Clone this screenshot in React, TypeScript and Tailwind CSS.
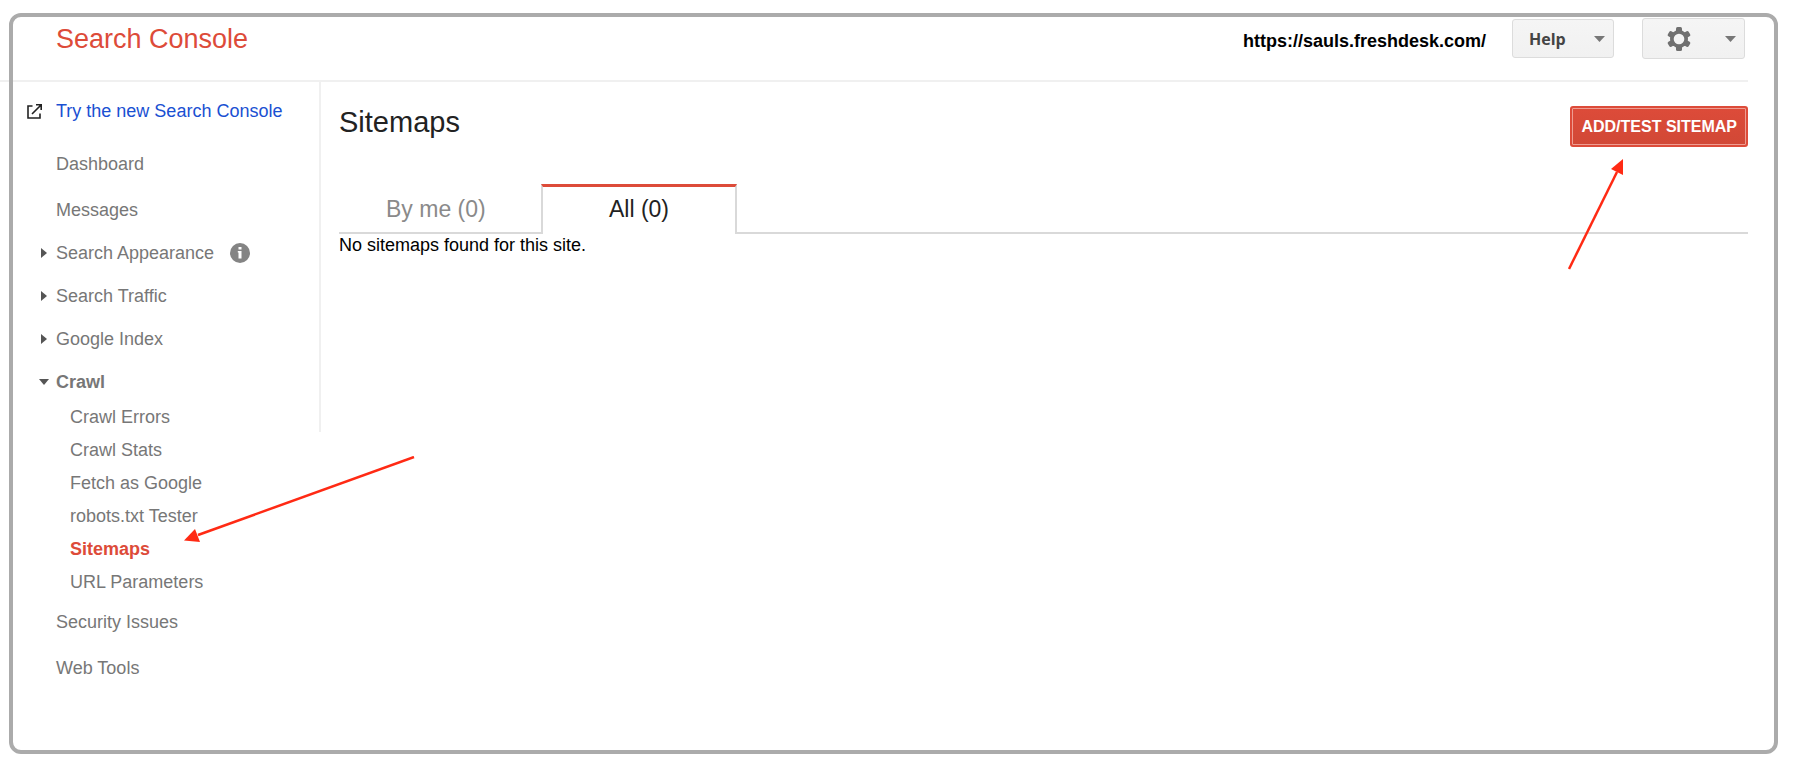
import React, { useState } from 'react';

type NavItem = {
  label: string;
  expandable?: boolean;
  info?: boolean;
  children?: string[];
};

const navItems: NavItem[] = [
  { label: 'Dashboard' },
  { label: 'Messages' },
  { label: 'Search Appearance', expandable: true, info: true },
  { label: 'Search Traffic', expandable: true },
  { label: 'Google Index', expandable: true },
  {
    label: 'Crawl',
    expandable: true,
    children: ['Crawl Errors', 'Crawl Stats', 'Fetch as Google', 'robots.txt Tester', 'Sitemaps', 'URL Parameters'],
  },
  { label: 'Security Issues' },
  { label: 'Web Tools' },
];

const tabs = ['By me (0)', 'All (0)'];

const getItemPadding = (item: NavItem) => {
  if (item.children) return 'pt-2';
  if (item.expandable) return 'pt-2 pb-[11px]';
  return 'py-[11px]';
};

const Caret = () => (
  <svg width="11" height="6" viewBox="0 0 11 6" fill="#777">
    <path d="M0 0h11L5.5 6z" />
  </svg>
);

const GearIcon = () => (
  <svg width="26" height="26" viewBox="0 0 26 26">
    <g fill="#707070">
      <rect x="10" y="1" width="6" height="24" rx="1.5" />
      <rect x="10" y="1" width="6" height="24" rx="1.5" transform="rotate(60 13 13)" />
      <rect x="10" y="1" width="6" height="24" rx="1.5" transform="rotate(120 13 13)" />
      <circle cx="13" cy="13" r="9" />
    </g>
    <circle cx="13" cy="13" r="5.300" fill="#f3f3f3" />
  </svg>
);

const OpenIcon = () => (
  <svg width="16" height="16" viewBox="0 0 16 16" fill="none" stroke="#222" strokeWidth="1.6">
    <path d="M6.500 3H2v12h12v-4.500" />
    <path d="M6 11l8.500-8.500M10 1.800h5.200V7" />
  </svg>
);

const InfoIcon = () => (
  <svg width="20" height="20" viewBox="0 0 20 20">
    <circle cx="10" cy="10" r="10" fill="#848484" />
    <path d="M8.500 4h3v2.500h-3zM7.800 8h3.700v7.500h-3V9.500h-.7z" fill="#fff" />
  </svg>
);

const App: React.FC = () => {
  const [activeTab, setActiveTab] = useState('All (0)');
  const [activePage, setActivePage] = useState('Sitemaps');

  return (
    <div className="relative h-screen min-h-[720px] bg-white font-['Liberation_Sans',Arial,sans-serif] text-lg leading-6 text-black">
      <header className="mr-[49px] flex h-[82px] justify-between border-b-2 border-[#f0f0f0] pt-[18px] pl-14">
        <h1 className="text-[27px] leading-[42px] text-[#dd4b39]">Search Console</h1>
        <div className="flex items-start">
          <span className="mr-[26px] leading-[46px] font-bold">https://sauls.freshdesk.com/</span>
          <button className="mt-px mr-7 flex h-[39px] w-[102px] items-center justify-between rounded-[3px] border border-[#dcdcdc] bg-linear-to-b from-[#f5f5f5] to-[#f1f1f1] pr-2 pl-4 font-['Open_Sans',sans-serif] text-base font-bold text-[#444]">
            Help
            <Caret />
          </button>
          <button
            aria-label="Settings"
            className="mr-[3px] flex h-[41px] w-[103px] items-center justify-between rounded-[3px] border border-[#dcdcdc] bg-linear-to-b from-[#f5f5f5] to-[#f1f1f1] pr-2 pl-[23px]"
          >
            <GearIcon />
            <Caret />
          </button>
        </div>
      </header>

      <div className="flex items-start">
        <nav className="h-[350px] w-[321px] shrink-0 border-r-2 border-[#f0f0f0] pt-[17px] pl-[26px] text-[#777]">
          <a href="#new" className="flex items-center gap-[14px] text-[#1a50d2]">
            <OpenIcon />
            Try the new Search Console
          </a>
          <ul className="pt-[18px]">
            {navItems.map(item => (
              <li key={item.label} className={getItemPadding(item)}>
                <a href="#nav" className={`flex items-center ${item.children ? 'font-bold' : ''}`}>
                  <span className="flex w-[30px] justify-center pl-1.5">
                    {item.expandable && !item.children && (
                      <svg width="6" height="10" viewBox="0 0 6 10" fill="#555">
                        <path d="M0 0l6 5-6 5z" />
                      </svg>
                    )}
                    {item.children && (
                      <svg width="10" height="6" viewBox="0 0 10 6" fill="#555">
                        <path d="M0 0h10L5 6z" />
                      </svg>
                    )}
                  </span>
                  {item.label}
                  {item.info && (
                    <span className="ml-4">
                      <InfoIcon />
                    </span>
                  )}
                </a>
                {item.children && (
                  <ul className="pt-[7px] pl-11">
                    {item.children.map(child => (
                      <li key={child}>
                        <a
                          href="#page"
                          onClick={() => setActivePage(child)}
                          className={`block leading-[33px] ${child === activePage ? 'font-bold text-[#dd4b39]' : ''}`}
                        >
                          {child}
                        </a>
                      </li>
                    ))}
                  </ul>
                )}
              </li>
            ))}
          </ul>
        </nav>

        <main className="mr-[49px] grow pt-6 pl-[18px]">
          <div className="flex items-start justify-between">
            <h2 className="text-[29px] leading-8 text-[#222]">Sitemaps</h2>
            <button className="h-[41px] rounded-[3px] border-2 border-[#dd4b39] bg-linear-to-b from-[#dd4b39] to-[#d14836] px-[9px] text-base font-bold text-white inset-ring inset-ring-[#ee9d92]">
              ADD/TEST SITEMAP
            </button>
          </div>

          {/* Tab strip, the active tab opens onto the content below */}
          <div role="tablist" className="mt-[37px] flex h-[50px] text-[23px]">
            {tabs.map(tab => (
              <button
                key={tab}
                role="tab"
                aria-selected={tab === activeTab}
                onClick={() => setActiveTab(tab)}
                className={
                  tab === activeTab
                    ? 'w-[196px] border-x-2 border-t-3 border-x-[#d9d9d9] border-t-[#dd4b39] pb-[3px] text-[#222]'
                    : 'w-[202px] border-b-2 border-[#d9d9d9] px-[47px] pt-px text-left text-[#8a8a8a]'
                }
              >
                {tab}
              </button>
            ))}
            <div className="grow border-b-2 border-[#d9d9d9]" />
          </div>
          <p className="leading-[22px]">No sitemaps found for this site.</p>
        </main>
      </div>

      {/* Rounded frame and callout arrows drawn over the page */}
      <div className="pointer-events-none absolute top-[13px] right-[19px] bottom-[18px] left-[9px] rounded-xl border-4 border-[#ababab]" />
      <svg className="pointer-events-none absolute top-[456px] left-[184px]" width="232" height="88" viewBox="0 0 232 88">
        <path d="M230 1L14 79" stroke="#ff2a14" strokeWidth="2.500" />
        <path d="M0 84.500L11 73l5 13z" fill="#ff2a14" />
      </svg>
      <svg className="pointer-events-none absolute top-[158px] right-[171px]" width="58" height="114" viewBox="0 0 58 114">
        <path d="M1 111L49 14" stroke="#ff2a14" strokeWidth="2.500" />
        <path d="M55 1v16L43 11z" fill="#ff2a14" />
      </svg>
    </div>
  );
};

export default App;
